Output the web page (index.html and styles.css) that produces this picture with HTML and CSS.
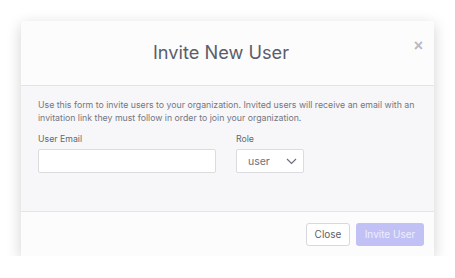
FILE: index.html
```html
<!DOCTYPE html>
<html lang="en">
<head>
    <meta charset="UTF-8">
    <meta name="viewport" content="width=device-width, initial-scale=1.0">
    <title>Invite New User</title>
    <link rel="stylesheet" href="styles.css">
</head>
<body>
    <div class="modal">
        <div class="modal-header">
            <h1>Invite New User</h1>
            <button class="close-x" aria-label="Close">&times;</button>
        </div>
        <div class="modal-body">
            <p class="intro">Use this form to invite users to your organization. Invited users will receive an email with an invitation link they must follow in order to join your organization.</p>
            <div class="fields">
                <div class="field email-field">
                    <label for="email">User Email</label>
                    <input type="email" id="email">
                </div>
                <div class="field role-field">
                    <label for="role">Role</label>
                    <div class="select">
                        <span>user</span>
                        <svg width="11" height="7" viewBox="0 0 11 7"><path d="M1 1l4.5 4.5L10 1" fill="none" stroke="#6b6f7a" stroke-width="1.2"/></svg>
                    </div>
                </div>
            </div>
        </div>
        <div class="modal-footer">
            <button class="btn btn-close">Close</button>
            <button class="btn btn-invite">Invite User</button>
        </div>
    </div>
</body>
</html>
```

FILE: styles.css
```css
body, html {
    margin: 0;
    padding: 0;
    background: #ffffff;
    font-family: 'Inter', 'Liberation Sans', sans-serif;
}
body {
    padding: 21px 0 0 21px;
}
.modal {
    width: 413px;
    background: #f7f7f9;
    box-shadow: 0 1px 0 #7d7d80, 0 4px 14px rgba(0,0,0,0.18);
}
.modal-header {
    height: 64px;
    background: #fcfcfd;
    border-bottom: 1px solid #e3e3e8;
    display: flex;
    align-items: center;
    justify-content: center;
    position: relative;
    padding-right: 13px;
}
h1 {
    margin: 0;
    font-size: 18.2px;
    font-weight: 400;
    color: #5b5e69;
    padding-bottom: 3px;
}
.close-x {
    position: absolute;
    top: 16px;
    right: 11px;
    border: none;
    background: none;
    color: #b9b9be;
    font-size: 16px;
    font-weight: 700;
    padding: 0;
    cursor: pointer;
    font-family: 'Liberation Sans', sans-serif;
}
.modal-body {
    height: 125px;
    padding: 0 17px;
    box-sizing: border-box;
    padding-top: 13px;
}
.intro {
    margin: 0;
    font-size: 8.75px;
    line-height: 13px;
    color: #737680;
}
.fields {
    display: flex;
    gap: 20px;
    margin-top: 9px;
}
.field label {
    display: block;
    font-size: 8.75px;
    color: #64676f;
    margin-bottom: 5px;
}
.field input {
    width: 178px;
    height: 24px;
    box-sizing: border-box;
    border: 1px solid #dcdce0;
    border-radius: 2px;
    background: #fff;
    margin: 0;
}
.select {
    width: 68px;
    height: 24px;
    box-sizing: border-box;
    border: 1px solid #dcdce0;
    border-radius: 2px;
    background: #fff;
    display: flex;
    align-items: center;
    justify-content: space-between;
    padding: 0 6px 0 11px;
    font-size: 10.5px;
    color: #6b6f7a;
}
.modal-footer {
    height: 44px;
    background: #fcfcfd;
    border-top: 1px solid #e3e3e8;
    display: flex;
    justify-content: flex-end;
    align-items: center;
    gap: 6px;
    padding-right: 10px;
}
.btn {
    height: 23px;
    font-family: inherit;
    font-size: 10px;
    border-radius: 3px;
    padding: 0;
    cursor: pointer;
}
.btn-close {
    width: 44px;
    background: #fff;
    border: 1px solid #d8d8dd;
    color: #5d606a;
}
.btn-invite {
    width: 68px;
    background: #c2c1f6;
    border: none;
    color: #eeeefc;
}
```
